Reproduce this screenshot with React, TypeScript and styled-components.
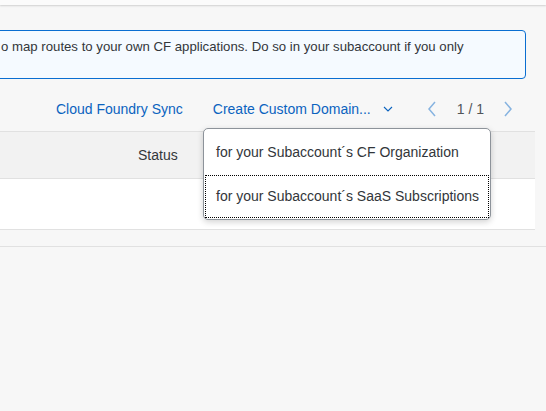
import styled, { createGlobalStyle } from "styled-components";

const GlobalStyle = createGlobalStyle`
  html, body {
    margin: 0;
    padding: 0;
    background: #f7f7f7;
    overflow: hidden;
    font-family: "Liberation Sans", Arial, sans-serif;
    color: #32363a;
  }
  * { box-sizing: border-box; }
`;

const Page = styled.div`
  position: relative;
  width: 546px;
  height: 411px;
  overflow: hidden;
`;

const ShellBar = styled.div`
  height: 5px;
  background: #fbfbfb;
  box-shadow: 0 1px 2px rgba(0, 0, 0, 0.16);
`;

const Content = styled.div`
  padding-top: 25px;
`;

const InfoStrip = styled.div`
  margin: 0 20px 0 -12px;
  height: 49px;
  padding: 7px 12px 0 12px;
  background: #f5faff;
  border: 1px solid #0a6ed1;
  border-radius: 4px;
  font-size: 13.2px;
  line-height: 18px;
  white-space: nowrap;
  overflow: hidden;
`;

const Toolbar = styled.div`
  height: 52px;
  padding-top: 7px;
  margin-right: 33px;
  display: flex;
  align-items: center;
  justify-content: flex-end;
  font-size: 14px;
`;

const Link = styled.span`
  color: #0b63bf;
  white-space: nowrap;
`;

const MenuButton = styled.div`
  display: flex;
  align-items: center;
  margin-left: 30px;
  gap: 12px;
`;

const Paging = styled.div`
  display: flex;
  align-items: center;
  margin-left: 34px;
`;

const PageText = styled.span`
  color: #515559;
  margin: 0 19px 0 20px;
`;

const Table = styled.div`
  margin-right: 11px;
`;

const HeaderRow = styled.div`
  height: 48px;
  background: #f2f2f2;
  border-top: 1px solid #e1e1e1;
  border-bottom: 1px solid #e1e1e1;
  display: flex;
  align-items: center;
  padding-left: 138px;
  font-size: 14px;
  color: #32363a;
`;

const BodyRow = styled.div`
  height: 51px;
  background: #ffffff;
  border-bottom: 1px solid #e1e1e1;
`;

const Footer = styled.div`
  margin-top: 16px;
  border-top: 1px solid #e1e1e1;
`;

const Popover = styled.div`
  position: absolute;
  left: 203px;
  top: 128px;
  width: 288px;
  height: 92px;
  background: #ffffff;
  border: 1px solid #8d939a;
  border-radius: 5px;
  box-shadow: 0 2px 6px rgba(0, 0, 0, 0.18);
  padding: 1px;
  display: flex;
  flex-direction: column;
`;

const MenuItem = styled.div<{ $focused?: boolean }>`
  height: 45px;
  display: flex;
  align-items: center;
  padding-left: 11px;
  font-size: 14px;
  color: #32363a;
  white-space: nowrap;
  outline: ${(p) => (p.$focused ? "1px dotted #000" : "none")};
  outline-offset: -1px;
  margin-top: ${(p) => (p.$focused ? "1px" : "0")};
`;

const Chevron = ({ dir, color }: { dir: "left" | "right" | "down"; color: string }) => {
  if (dir === "down") {
    return (
      <svg width="10" height="6" viewBox="0 0 10 6">
        <polyline points="1,1 5,5 9,1" fill="none" stroke={color} strokeWidth="1.1" />
      </svg>
    );
  }
  const pts = dir === "left" ? "8,1 2,8 8,15" : "2,1 8,8 2,15";
  return (
    <svg width="10" height="16" viewBox="0 0 10 16">
      <polyline points={pts} fill="none" stroke={color} strokeWidth="1.5" />
    </svg>
  );
};

export default function App() {
  return (
    <Page>
      <GlobalStyle />
      <ShellBar />
      <Content>
        <InfoStrip>
          o map routes to your own CF applications. Do so in your subaccount if you only
        </InfoStrip>
        <Toolbar>
          <Link>Cloud Foundry Sync</Link>
          <MenuButton>
            <Link>Create Custom Domain...</Link>
            <Chevron dir="down" color="#0b63bf" />
          </MenuButton>
          <Paging>
            <Chevron dir="left" color="#86b3e0" />
            <PageText>1 / 1</PageText>
            <Chevron dir="right" color="#86b3e0" />
          </Paging>
        </Toolbar>
        <Table>
          <HeaderRow>Status</HeaderRow>
          <BodyRow />
        </Table>
        <Footer />
      </Content>
      <Popover>
        <MenuItem>for your Subaccount´s CF Organization</MenuItem>
        <MenuItem $focused>for your Subaccount´s SaaS Subscriptions</MenuItem>
      </Popover>
    </Page>
  );
}
